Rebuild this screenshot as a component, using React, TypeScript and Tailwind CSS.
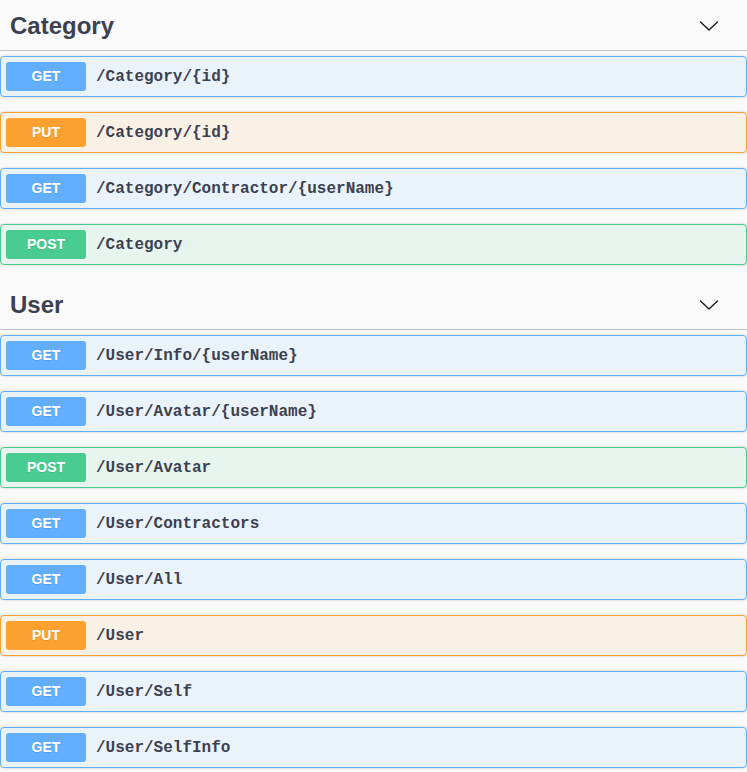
import React from "react";

type Method = "GET" | "PUT" | "POST";

const styles: Record<Method, { box: string; badge: string }> = {
  GET: { box: "bg-[#ebf3fa] border-[#61affe]", badge: "bg-[#61affe]" },
  PUT: { box: "bg-[#faf1e6] border-[#fca130]", badge: "bg-[#fca130]" },
  POST: { box: "bg-[#e8f5ef] border-[#49cc90]", badge: "bg-[#49cc90]" },
};

const sections: { tag: string; ops: [Method, string][] }[] = [
  {
    tag: "Category",
    ops: [
      ["GET", "/Category/{id}"],
      ["PUT", "/Category/{id}"],
      ["GET", "/Category/Contractor/{userName}"],
      ["POST", "/Category"],
    ],
  },
  {
    tag: "User",
    ops: [
      ["GET", "/User/Info/{userName}"],
      ["GET", "/User/Avatar/{userName}"],
      ["POST", "/User/Avatar"],
      ["GET", "/User/Contractors"],
      ["GET", "/User/All"],
      ["PUT", "/User"],
      ["GET", "/User/Self"],
      ["GET", "/User/SelfInfo"],
    ],
  },
];

function Chevron() {
  return (
    <svg width="20" height="20" viewBox="0 0 20 20" fill="none">
      <path d="M1.5 6 L10 14 L18.5 6" stroke="#1b1b1b" strokeWidth="1.4" strokeLinecap="round" strokeLinejoin="round" />
    </svg>
  );
}

function Op({ method, path }: { method: Method; path: string }) {
  const s = styles[method];
  return (
    <div className={`mb-[15px] flex items-center rounded-[4px] border p-[5px] shadow-[0_0_3px_rgba(0,0,0,0.19)] ${s.box}`}>
      <div
        className={`flex h-[29px] w-[80px] items-center justify-center rounded-[3px] text-[14px] font-bold text-white [text-shadow:0_1px_0_rgba(0,0,0,0.1)] ${s.badge}`}
        style={{ fontFamily: '"Liberation Sans", Arial, sans-serif' }}
      >
        {method}
      </div>
      <span
        className="ml-[10px] text-[16px] font-semibold text-[#3b4151]"
        style={{ fontFamily: '"Liberation Mono", "Courier New", monospace' }}
      >
        {path}
      </span>
    </div>
  );
}

export default function App() {
  return (
    <div className="min-h-[772px] w-[747px] bg-[#fafafa] pt-px" style={{ fontFamily: '"Liberation Sans", Arial, sans-serif' }}>
      {sections.map((sec) => (
        <div key={sec.tag}>
          <div className="mb-[5px] box-border flex h-[50px] items-center justify-between border-b border-[#c1c3c7] pl-[10px] pr-[28px]">
            <h3 className="text-[24px] font-bold text-[#3b4151]">{sec.tag}</h3>
            <Chevron />
          </div>
          {sec.ops.map(([m, p], i) => (
            <Op key={i} method={m} path={p} />
          ))}
        </div>
      ))}
    </div>
  );
}
